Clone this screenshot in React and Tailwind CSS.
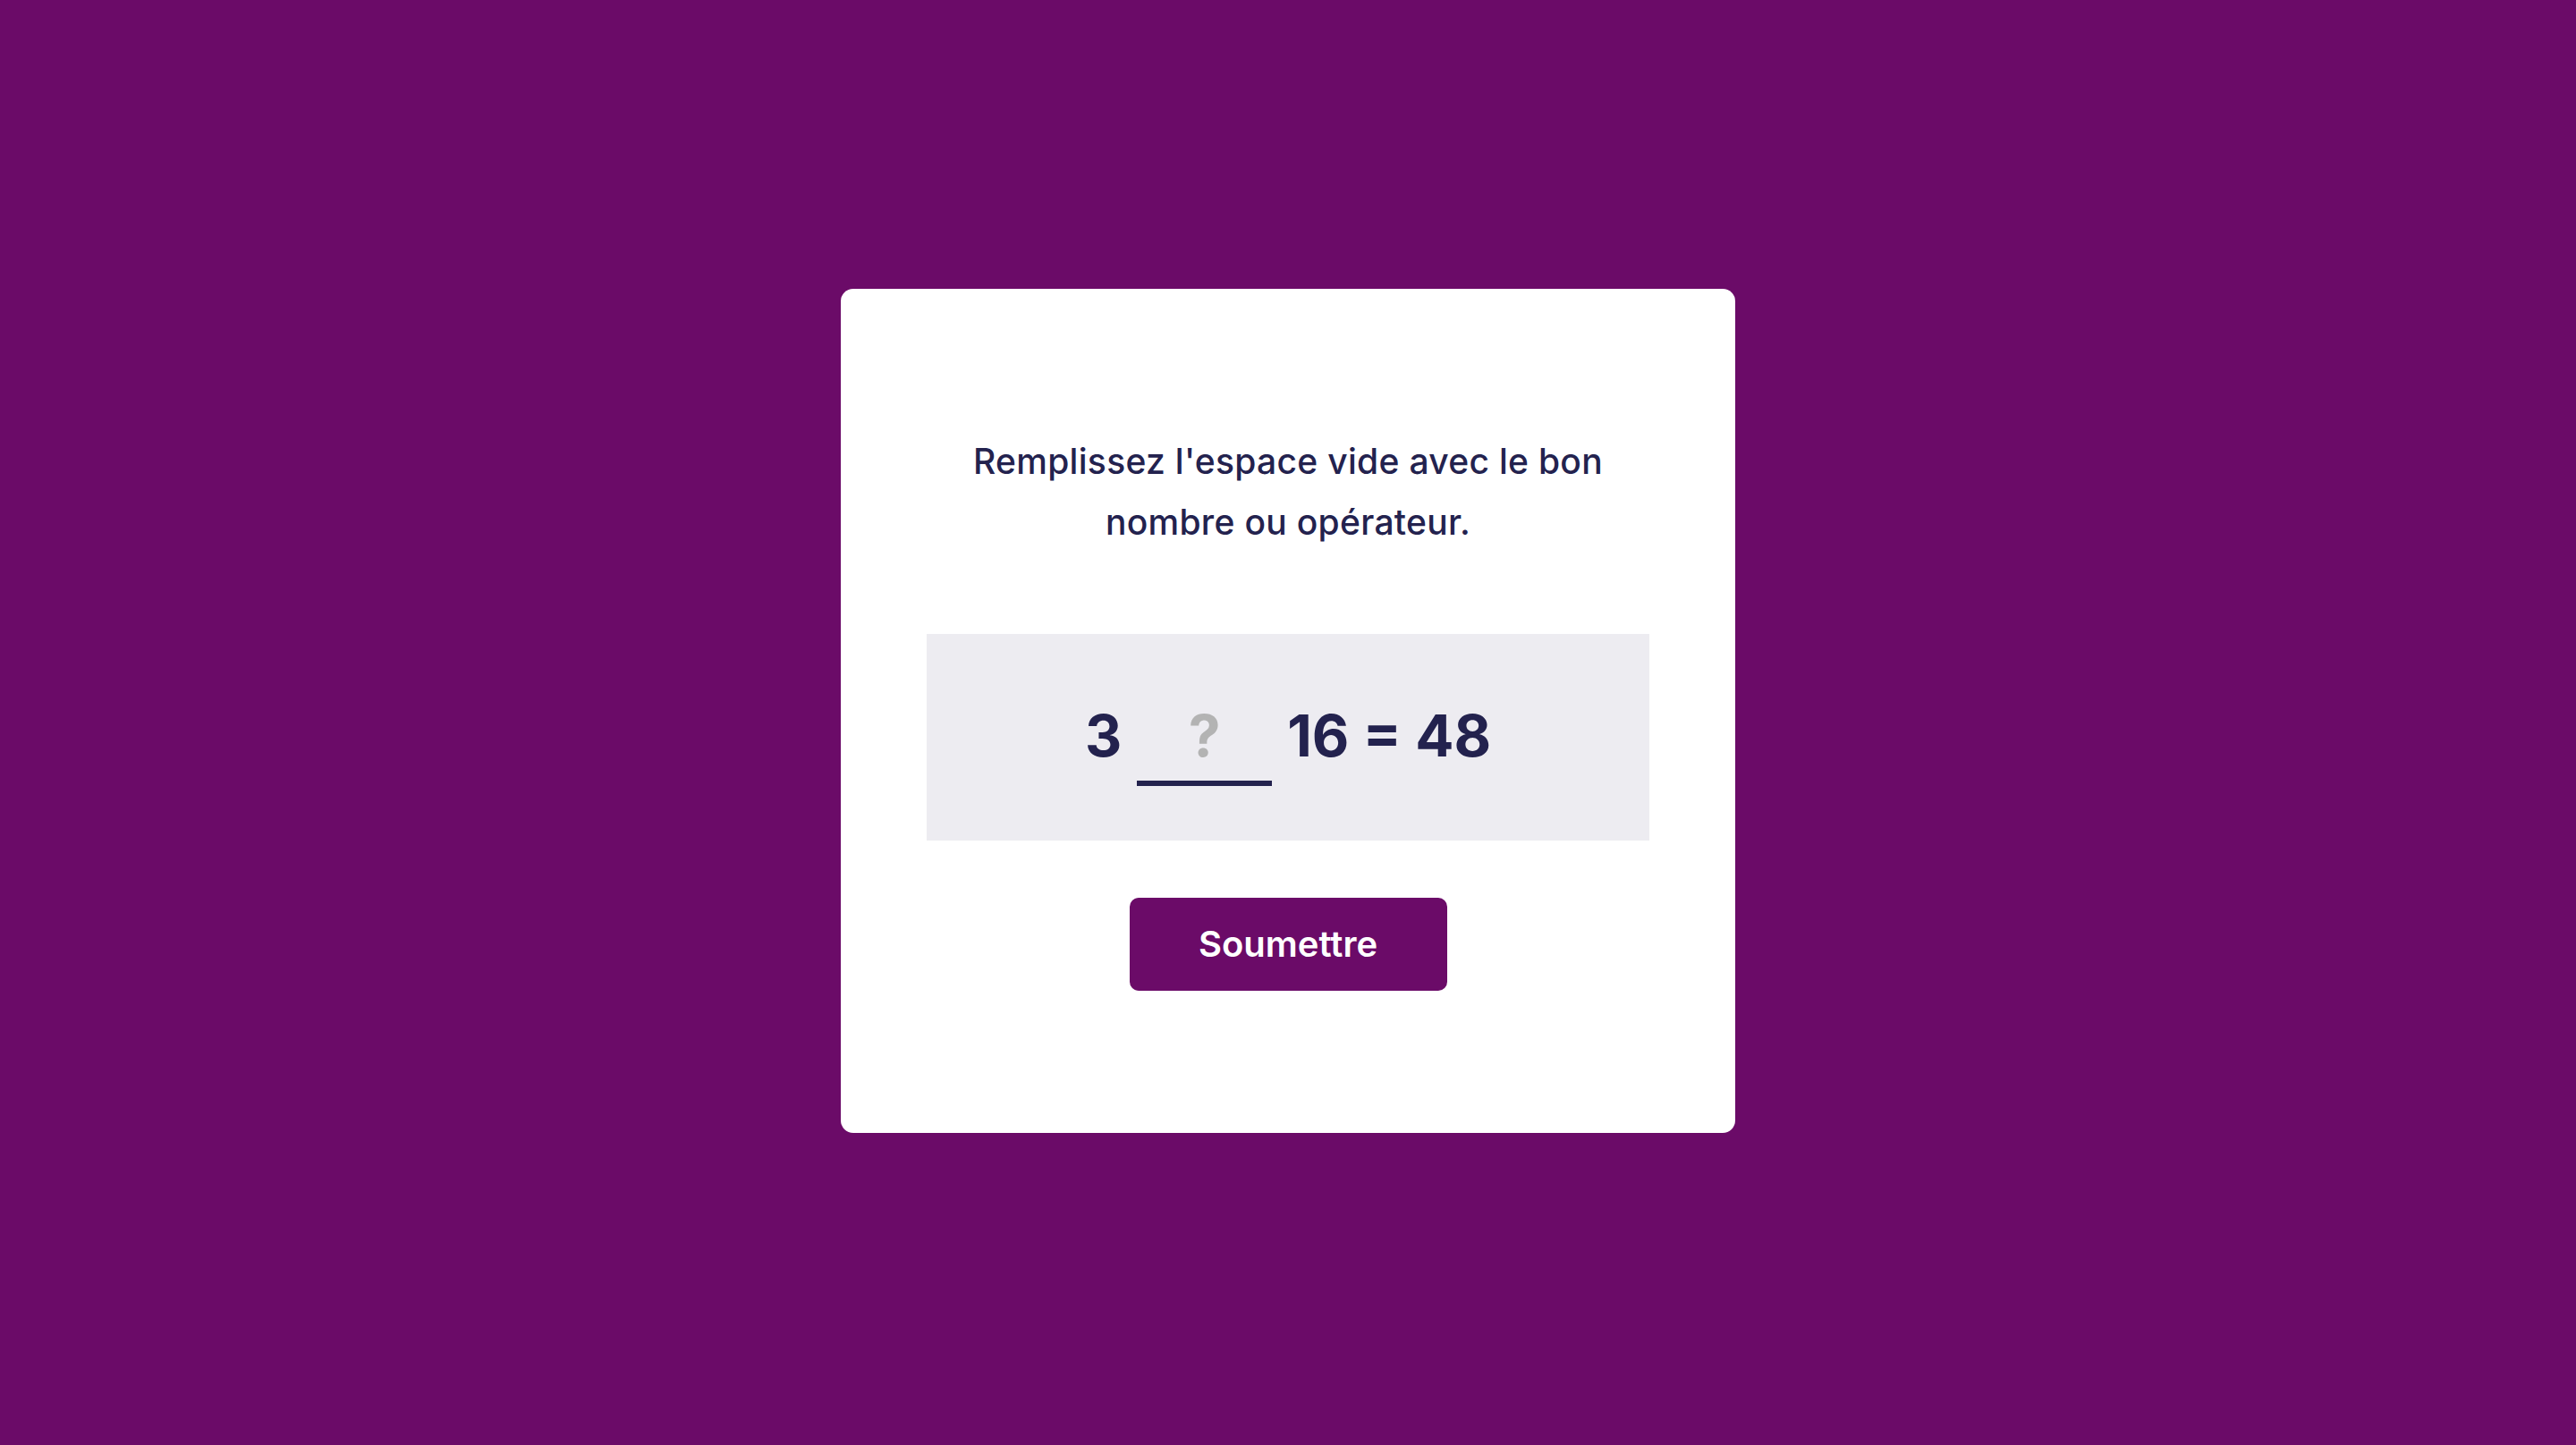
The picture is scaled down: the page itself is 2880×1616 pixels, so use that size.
const Equation = () => (
  <div className="flex h-[231px] w-full items-center justify-center bg-[#edecf1] pt-[20px]">
    <div className="flex items-baseline text-[64px] font-bold leading-none text-[#23224e]">
      <span>3</span>
      <div className="mx-[17px] flex w-[151px] justify-center border-b-[6px] border-[#23224e] pb-[18px]">
        <span className="text-[#b3b3b3]">?</span>
      </div>
      <span>16 = 48</span>
    </div>
  </div>
);

export default function App() {
  return (
    <div
      className="flex min-h-screen w-full flex-col items-center bg-[#6b0b68] pt-[323px]"
      style={{ fontFamily: 'Inter, "Open Sans", sans-serif' }}
    >
      <div className="flex w-[1000px] flex-col items-center rounded-[14px] bg-white px-[96px] py-[159px]">
        <p className="text-center text-[39px] font-medium leading-[68px] tracking-[0.3px] text-[#23224e]">
          Remplissez l'espace vide avec le bon
          <br />
          nombre ou opérateur.
        </p>
        <div className="mt-[91px] w-full">
          <Equation />
        </div>
        <button className="mt-[64px] h-[104px] w-[355px] rounded-[10px] bg-[#6b0b68] text-[40px] font-semibold text-white">
          Soumettre
        </button>
      </div>
    </div>
  );
}
